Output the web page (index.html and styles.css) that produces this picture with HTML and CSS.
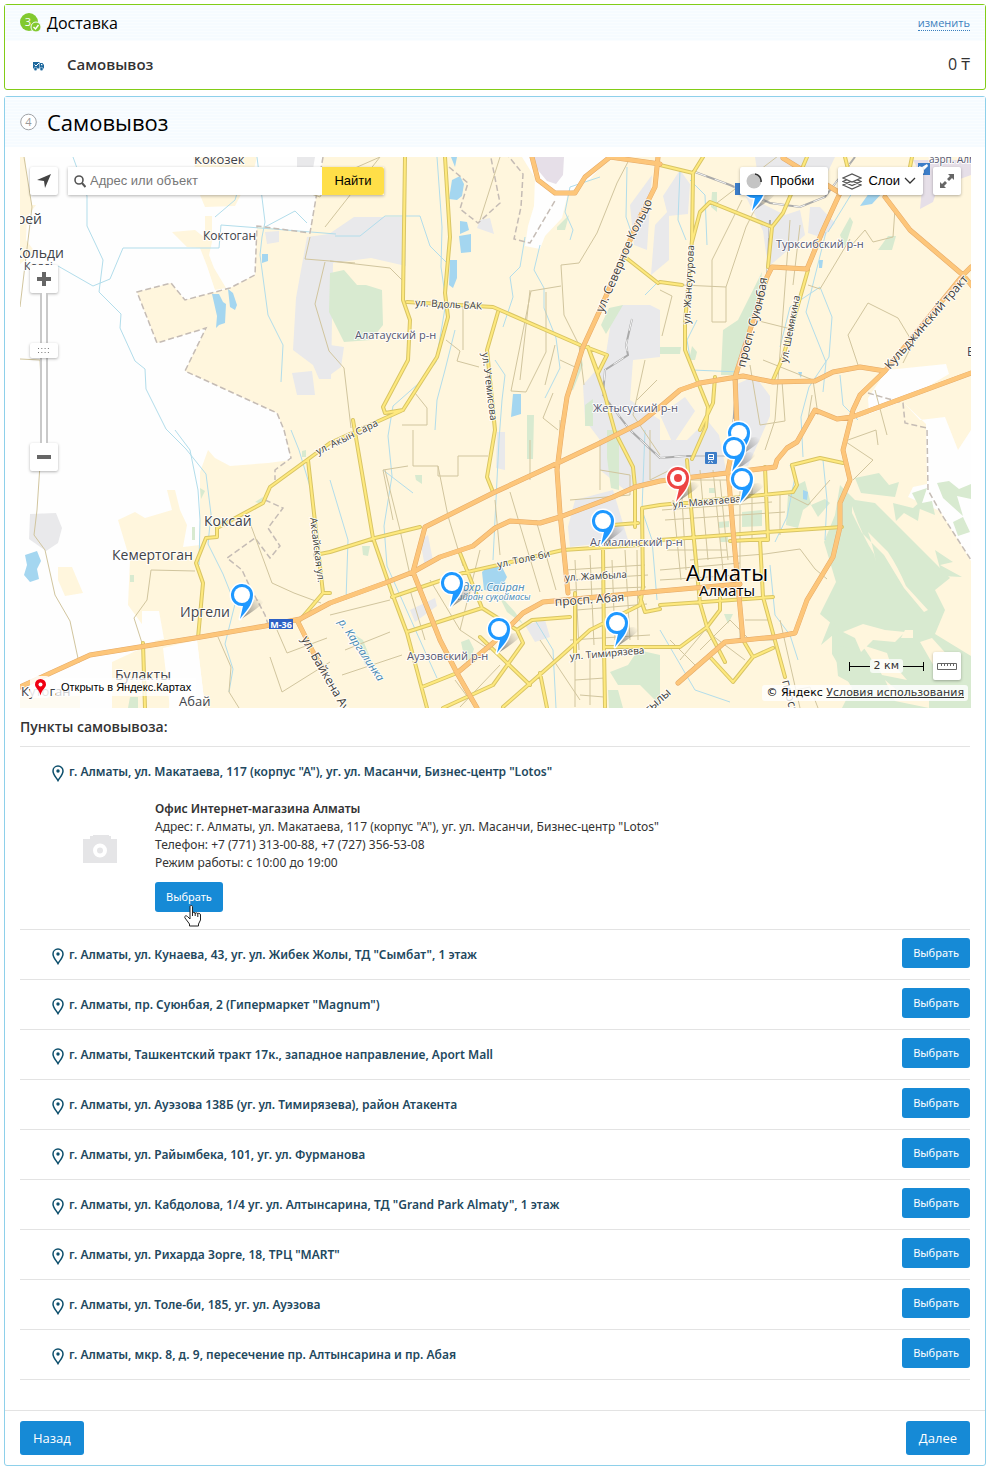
FILE: index.html
```html
<!DOCTYPE html>
<html lang="ru">
<head>
<meta charset="utf-8">
<title>Доставка — Самовывоз</title>
<meta name="viewport" content="width=device-width, initial-scale=1">
<link rel="stylesheet" href="styles.css">
</head>
<body>
<svg class="defs" width="0" height="0" aria-hidden="true">
  <defs>
    <linearGradient id="shade" gradientUnits="userSpaceOnUse" x1="0" y1="23" x2="20" y2="5">
      <stop offset="0" stop-color="#555" stop-opacity=".7"/><stop offset="1" stop-color="#555" stop-opacity="0"/>
    </linearGradient>
    <symbol id="marker" viewBox="-15 -15 42 42" overflow="visible">
      <path d="M-1 24L9 6Q17 2 22 6Q20 11 -1 24Z" fill="url(#shade)"/>
      <path d="M11 0A11 11 0 1 0 1 11L-2 24C3 17 11 10 11 0Z" fill="currentColor" stroke="#fff" stroke-width="3" stroke-linejoin="round"/>
      <path d="M11 0A11 11 0 1 0 1 11L-2 24C3 17 11 10 11 0Z" fill="currentColor"/>
      <circle r="8" fill="#fff"/>
    </symbol>
    <symbol id="place" viewBox="0 0 12 17">
      <path d="M6 1.100C3.200 1.100 1 3.300 1 6c0 3.500 3.200 6.500 5 9.600C7.800 12.500 11 9.500 11 6c0-2.700-2.200-4.900-5-4.900Z" fill="none" stroke="#0d4f6c" stroke-width="1.500"/>
      <circle cx="6" cy="6" r="1.700" fill="#0d4f6c"/>
    </symbol>
  </defs>
</svg>

<section class="panel panel-done">
  <header class="panel-head head-small">
    <svg class="step" width="21" height="20" viewBox="0 0 21 20">
      <circle cx="9" cy="9" r="9" fill="#82c92f"/>
      <text x="8" y="13" class="step-digit">3</text>
      <circle cx="16" cy="14" r="5" fill="#82c92f" stroke="#f7fbff"/>
      <path d="M13.500 14l2 2 3-4" fill="none" stroke="#fff" stroke-width="1.400"/>
    </svg>
    <h2>Доставка</h2>
    <a class="change" href="#delivery">изменить</a>
  </header>
  <div class="chosen">
    <svg class="truck" width="11" height="10" viewBox="0 0 11 10">
      <path d="M0 1h6.500v6.500H0zM7 2h2.500L11 4v3.500H7z" fill="#1b679d"/>
      <path d="M1.500 3.500l1.500 1.500 3-3" fill="none" stroke="#fff"/><path d="M8 3h1l.8 1.200H8z" fill="#fff"/>
      <circle cx="2.500" cy="8" r="1.700" fill="#1b679d" stroke="#fff" stroke-width=".5"/><circle cx="8.500" cy="8" r="1.700" fill="#1b679d" stroke="#fff" stroke-width=".5"/>
    </svg>
    <strong>Самовывоз</strong>
    <span class="price">0 ₸</span>
  </div>
</section>

<section class="panel panel-current">
  <header class="panel-head head-large">
    <svg class="step" width="17" height="18" viewBox="0 0 17 18">
      <circle cx="8.500" cy="9" r="7.800" fill="#fff" stroke="#a0a3a7"/>
      <text x="8.500" y="13" class="step-digit step-open">4</text>
    </svg>
    <h1>Самовывоз</h1>
  </header>

  <div class="content">
  <div class="map">
    <svg class="map-canvas" viewBox="20 157 951 551" preserveAspectRatio="xMidYMid slice" role="img" aria-label="Карта Алматы">
      <rect x="20" y="157" width="951" height="551" fill="#fefefe"/>
      <g class="land">
        <path d="M20 157h5l3 28 4 20h4l-9 12-1 23 9 12-15 12z"/>
        <path d="M193 157h64l-3 12-19 37-30 1-5-12z"/>
        <path d="M172 232l23-2 10 8v-22h7v26l-3 13 5 13 12 20-11 2-8-24-7-18-13-1z"/>
        <path d="M323 157H971V708H205L197 640 163 648 170 708H112V662L155 642 128 605 130 560 118 520 135 512 145 518 172 510 167 490 175 490 180 510 187 525 183 547 200 545 200 472 208 450 215 458 230 466 268 463 291 460 284 430 277 413 185 371 206 328 157 343 137 292 171 283 185 300 230 288 255 275 257 226 310 233Z"/>
        <path d="M58 567h14l11 26-18 3-7-16z"/><path d="M20 697l60-5v16H20z" opacity=".35"/>
      </g>
      <g fill="#fefefe">
        <path d="M522 157h88l-20 22-22 14-6 25-17 18-5 13-15-3 3-20 6-20 1-28z"/>
        <path d="M887 370l59-6 3 10-44 26-36 14-1-16z"/>
        <path d="M903 402l17 18 25-3 13 33 13-20v131l-31-50-32-14 5-10 14-3-1-60z"/>
        <path d="M142 611h17l5 28-22 4zM197 641l-22 4-6 63h36z"/>
      </g>
      <g class="urban">
        <path d="M297 157h18l-2 12h-16zM307 237l22-3 25-17h52v49l-35-8-38 5-2 116-12 0-6-14-20-15 3-52zM292 373l20-2 3 24-18 0zM265 232l14-1v11l-12 2z"/>
        <path d="M30 514l26-1 6 15-4 15-12 8-17-12z"/>
        <path d="M480 220l10-2 4 16-17-6zM330 345l14 2-3 20-11 8z"/>
        <path d="M612 315l10-10 28 0 10 5v47l-27 3-3 40 30 20v60l-35 10-25-20 0-30-15-20-2-35 22-25z"/>
        <path d="M575 500l38-10 15 50-58 7-2-20zM600 435l60 5v40l-25 10-15-20-15-2zM630 205l22-30-5 75-13-5zM655 225l14-15v50l-18 15z"/>
        <path d="M660 440h27l20-20 12 15 8 40-67 8zM735 385l20-9 15 20 0 20-22 50-14 0zM745 195l40 20 15-5 5 25-25 22-12 10-5-36zM810 207l10 0 15 16-12 15-15-5zM680 170l10 14-2 30-20 2-5-20zM755 157h80l-12 25-40 5-25-10z"/>
        <path d="M410 610l25-12 2 8-22 16zM420 540l8-5 5 26-8 6zM525 625l20-5 5 17-15 5zM497 432l8 0v38l-9-2zM660 415l25-18 10 14-22 33z"/>
      </g>
      <g fill="#e6dfe8">
        <path d="M533 157h31l-1 18-7 9-9-3-10-12zM913 160h58v15l-33 12-5 15-13 7 3-30z"/>
      </g>
      <g class="park">
        <path d="M330 273l14-3 13 15 9 0 16 5 1 35-12 15-27 2-15-30z"/>
        <path d="M580 350l-12 40 5 0 10-25zM601 325l8-17 14-3-7 12-10 17zM557 227l12-12-4 15-8 0zM585 405l8-6v27h-8zM607 430l12 0 0 60-8-2-4-30zM527 415l7 0-1 44-6 0z"/>
        <path d="M762 272l-5 45-12 25-8 33-16 0 2-45 15-10zM660 347h21l-1 7h-20zM878 250l10-14 8 0-4 14zM840 235l10-18 3 5-8 25zM712 192l5 0v20l-6-5zM692 346l5 6-2 8h-6z"/>
        <path d="M742 512l20-2v16l-20 1zM793 487l12-6 6 23-8 6-5 18-12-3 2-30zM811 505l14-6 5 4-12 14zM718 522l11-1v6l-10 1zM709 488h6v5h-6zM724 614h9l-5 10zM720 537h8v5h-8z"/>
        <path d="M855 500l20 3 25 25 30 30 20 20-15 12 10 20-10 24 36 22v52H842l10-20-20-34 0-30-12-10 16-32-12-40 11-27 5-30z"/>
        <path d="M855 478l24-5 10 12 10-3-4 15-34-4zM893 503l20 5 8-7-3 20-14-8-8 8zM912 493l15-5-5 15 10-2 3 14-15-6zM937 483l12-2 10 8 12-5 0 15-14-3 6 20-20-18zM953 522l10-5 7 15-12 4zM935 550l18 12-13 3 22 12-20-1z"/>
        <path d="M831 620l8 10-18 15 8-20zM835 645l15 3 10 40-22-12zM610 672l18-7 10-15 22 5 0 50-20-20-22 0zM608 690l10 0 5 18-14 0zM461 642l8-3 5 10-6 17-4-10zM355 635l8 5 10 25-8 0zM497 592l18 20 8 12-16-12zM362 546l8 0-2 10-5-1zM415 475l7 0v9l-6-4zM255 502l8-5-1 7zM302 451l4-1 0 7-4 0zM192 527l3 0v13l-3 0zM200 488l5 3-4 8zM130 575h4v7h-4zM130 697h8v11h-10z"/>
      </g>
      <g fill="#fff6dd">
        <path d="M843 632l20-8 22 6 20 2-10 10-22-2-12 12-6-14zM862 645l25 8 5 15-20-8zM875 662l20 4 12 14-25-5zM905 630l8 0 0 8-12 0zM920 642l12-4 18 20-12 0 22 20-25-10zM885 680l14 12 30 8v8l-34-7z"/>
        <path d="M852 506q10 30 22 48l2 8q-4-20-8-30l20 20q10 15 18 34l22 24-4 2-20-24-20-33-22-22-10-20z"/>
      </g>
      <g fill="#a4d6f0">
        <path d="M212 294l7 0 4 8 3 2-1 19-6 2-3 3 1-12zM228 289l5 4 4 12-2 5-5-3zM262 254l6 0 0 7-6 2zM25 555l12-4 4 10-4 8 2 10-9 3-6-7 3-10z"/>
        <path d="M452 180l8-4 4 8-2 12-5 4-8-1zM451 157h6l-2 10zM460 221l7 1 2 8-9 4zM459 236l12-2v18l-10 1zM450 260l7 0v18l-4 10-4-3zM513 394l8 0v20l-10 3zM482 572l7-7 12 0 6 12-8 15-15-2zM803 490l5 2-1 8-4-1zM860 206l14-20 10 5-12 13zM819 260l4 0-1 8-3 0zM798 372l4 0-1 6z"/>
      </g>
      <g class="stream">
        <path d="M73 157l14 39v30l9 19 7 15-4 32 22 22-1 14 15 33 10 8 1 20 20 40 20 20 20 25 5 40-3 30 15 30 12 30-10 40 8 25-4 23M58 266l35 20 17-7 13-31h96l2-23 65 5 50 4M257 157l8 65-3 15-2 18 8 60 15 30-2 37M215 217l20-17 10-33M265 227l30-16 12 12M175 430l15 20 8 40 2 30-1 45M291 430l8 20 12 40 5 50 8 50M335 236h25l25-20h35l10 30 17 17M437 157l5 70-1 40 5 35-10 60-18 22-25 22-5 30 4 40-8 50 3 40 40 90 10 22M495 360l10 15-3 25-3 40-6 120M525 237l-5 30-10 10 3 20-10 30M540 245l-6 25 10 18 0 20 12 30 4 30-15 30M383 470l30 23M455 330l-10 40-8 30-2 30M600 177l-30 10-5 25 8 18-3 10"/>
        <path d="M680 170l-2 50 8 20M690 180l15 15 2 50M627 167l-1 50 7 20-5 15M697 320l-10 20 5 30 48 2M780 347l10-40 30-20 12 30-3 40-20 30-8 30 2 40M826 232l-20 80 20 50-3 30M840 375l3 30 15 15M868 167l-40 65M790 465l5 12-8 40-12 25M660 280l-15 15M823 460l4 40-2 40M535 620l18 30 3 58M770 565l5 50 15 20 8 25M660 630l35 60 35 12M645 430l-3 80 10 30 5 60M330 480l18 60-2 60"/>
      </g>
      <g class="border">
        <path d="M323 157l-13 76-53-7-2 49-25 13-45 12-14-17-34 9 20 51 49-15-21 43 92 42 7 17 7 28-16 12v10"/><path d="M265 500l18 8-15 20 12 18-10 12-15-20-28 20 15 12 7 15 16 30 4 12M449 167l19 16-8 26 18 14 22-20-10-50 15-1 18 22-2 33-7 32 16 4 26-44M868 393l35 10 2 20 22 5 1 62 14 25 29 45"/>
      </g>
      <g class="lane">
        <path d="M24 157l8 50-12 100M20 359l20 1 3 60-6 90-3 25 11 15 10 45 15 26 9 42M151 570l44 1M151 570l-4 30-13 18 8 25M250 523l22 60 22 10 27 10M277 630l10 23 40-15M270 657l12 35 48-30M218 637l13 30-2 25 10 16M300 190l20 7 10-18 50-22M310 237l-5 22 50 4M325 262l-10 42 14 47 15 17 7 60M380 157l-55 70M330 261l60 7 15 15M446 340l14 11-3 10 22 6M463 303v47M480 220l20-63M415 393l12 15v17h-25M413 430v36h25v10h20v-20h30M438 466l10 50 15 50M385 470l15 60 10 45M408 466l-25 4 10 50M510 492l30 100M536 520l20 70M495 500l5 55"/>
        <path d="M561 265l3 50 15 30 5 40M561 265l18-2 18-30 20-50 13-25M561 286l-30 5-20 100 15 1 20-40 0-60M530 290l-10 90M555 345l-10 40M560 360l17 8M553 393l-10 25 15 12M600 470l30 5v20l-60 5M600 440v50M530 440v40M645 360l-12 55 27 40M637 400l20-20M650 430v50l20-10"/>
        <path d="M660 290l12 6-10 40M713 206l65-50M742 200l-30 60v62h14l0-35 20-60 10-20M682 285l44 2M755 320l40 10M790 220l-15 200-10 30M800 225l-7 60M808 285l12 4 30-50M850 247l15-17 8 12 20-5 2-28M848 335l20-32 30 15 15 25-10 20M848 335l10 30M750 365l10 60 25-4-3-40M763 360l50 20 5 35M812 395l-5 30M875 390l12 45M848 440l28-10 2 15M830 480l-22 25-20-10M843 440l30 20-20 20"/>
        <path d="M660 480h80M662 510l110-8M665 520l120-8M667 550h60M690 560l75-6 35-5 15 20 12 10M673 500l8 80M681 480l5 90M700 470l8 90M713 470l10 100M720 480l8 80M740 490v80M752 480v60M780 495v40M660 570l80-7M660 580l80-5M575 560l4 90M590 555l4 90M612 560l3 80M625 550l5 90M637 550l1 90M565 570l80-5M568 580l80-5M570 640l80-5M577 610l70-6M570 590l76-3M700 650l30-30 20 20M680 660l25-30 40 30M670 640l25 25M740 600v40h33M745 620h25M780 620l20 88M795 690l15-3 8 21"/>
        <path d="M345 650l45-18M342 675l60-20M390 600l-60 15M410 590l15 50M430 580l30 50 30 20M480 550l-20 80M455 680l20 27M540 640l40 60M575 650v57M590 650v55M575 680l30-2M580 695l24 2M500 665l-40 42M560 420v20"/>
      </g>
      <g class="rail">
        <path id="r" d="M695 172l35 13 40 18 30 4 25-10 30-40M632 319l-6 26 2 10-23 15-2 25 27 35 30 28 25-2h60M767 280l3-60M737 377l-4 50"/>
        <use href="#r" class="rail-dash"/>
      </g>
      <g>
        <g class="road minor-edge">
          <path id="y" d="M405 157l-2 143 7 20-2 40-25 47 2 6 18-3 34-53 11-40-3-24 5-56-5-80M407 302l86 5 87 38M498 312l-11 38 8 80-8 47 6 15M403 410l-73 33-23 17-37 27-7 16-46 25v9l-11 1-10 25 7 20-5 55M353 420l20 118 19 55 15 40 20 75M330 552l45-14 45-11M392 597l71-24 100-23 77-5 20-5 107-8 75-5M460 553l22 55 35 22 6 13-30 42-50 23M407 632l75-24M480 637l50 48M422 687l35-14M503 707l57-50 30-27 50-25 3-18-1-79 18-3 133-13 4-7-5-20 28-7 23 5M517 630l15-10 38-3M603 547l1 100 1 60M687 460l6 70 7 73 7 24 18 35M765 467l3 73-8 0 3 57 22 80M660 605l113-8M720 597v13l-13 17-27 20h-76M710 657l23 25 20-25 20-9M743 640l10 17M730 541l38-2M660 165l33 8-1 67-7 83v27l23 57-2 20-14 32M693 173l10-16M772 227l-62-25-10 10-8 30M768 267l4-40 11-14 24-56M808 270l-25 87-10 23M660 282l22 3M715 377l-2 26-13 27M625 257l33 26M586 347l21 8-9 18-10-26 16 45 11 40 18 35 2 20v40M308 460l15 133-23 27M143 643l2 65M575 593l0 60M540 673l7 35M315 555l15-3M323 593l7 0M613 525l25-2M845 157l5 20M912 157l-2 10M640 597l5 15 15-3"/>
        </g>
        <use href="#y" class="road minor-fill"/>
      </g>
      <g>
        <g class="road major-edge">
          <path id="o" d="M20 687l70-32 105-17 70-12 35-7 30-16 55-20 28-11 27-15 33-11 22-18 15-7 30 2 20-6 53-20 22-10 25-6 67-8 48-6 2-7 10-12 10-6 18-32 22 9 15-2 119-44M413 572l12-45 68-34 67-31 40-19 40-20 20-16 20-17 20-7 43-7 30 6 42-1 18-9 27-5 25 4-25 24-7 15-5 20-5 20 7 30-10 23v24l-7 30-26 43-12 33-20 4-50 5-47 41M532 157l6 23 17 13h20l10-16 25-20 50 7M658 157l-3 30-15 30-40 93-17 37-16 50-5 33-5 40 3 43 8 80M735 377l32-100 5-10 35 2 16-39 17-37-57-35M735 377l2 50-9 43 5 60 10 110M885 197l25 33 53 45 10 12M885 371l78-96 8-8M457 673l36-30 30-30 20-11 117-11 80-7M413 572l27 68 17 33 20 35M298 622l15 30 12 20"/>
        </g>
        <use href="#o" class="road major-fill"/>
      </g>
      <g class="labels">
        <text x="194" y="164" font-size="13">Кокозек</text><text x="42" y="224" text-anchor="end" font-size="14">рей</text>
        <text x="64" y="258" text-anchor="end" font-size="14">Кольди</text><text x="24" y="270" font-size="11">Колді</text>
        <text x="203" y="240" font-size="12">Коктоган</text><text x="204" y="526" font-size="14">Коксай</text><text x="112" y="560" font-size="14">Кемертоган</text><text x="180" y="617" font-size="14">Иргели</text><text x="115" y="680" font-size="14">Булакты</text><text x="179" y="706" font-size="13">Абай</text><text x="21" y="696" font-size="13">Кутоган</text><text x="967" y="356" font-size="12">Б</text>
        <g class="district"><text x="355" y="339">Алатауский р-н</text><text x="593" y="412">Жетысуский р-н</text><text x="776" y="248">Турксибский р-н</text><text x="590" y="546">Алмалинский р-н</text><text x="407" y="660">Ауэзовский р-н</text><text x="929" y="163" font-size="10">аэрп. Алматы</text></g>
        <g class="street">
          <text transform="translate(415 306) rotate(3)">ул. Вдоль БАК</text><text transform="translate(482 353) rotate(83)">ул. Утемисова</text><text transform="translate(318 455) rotate(-26)">ул. Акын Сара</text><text transform="translate(690 324) rotate(-87)">ул. Жансугурова</text><text transform="translate(787 363) rotate(-79)">ул. Шемякина</text><text transform="translate(310 518) rotate(83)">Аксайская ул.</text><text transform="translate(498 568) rotate(-12)">ул. Толе би</text><text transform="translate(565 581) rotate(-3)">ул. Жамбыла</text><text transform="translate(570 660) rotate(-5)">ул. Тимирязева</text><text transform="translate(673 508) rotate(-5)">ул. Макатаева</text>
          <g font-size="12"><text transform="translate(555 606) rotate(-4)">просп. Абая</text><text transform="translate(301 639) rotate(60)">ул. Байкена Ауэзова</text><text transform="translate(890 370) rotate(-49)">Кульджинский тракт</text><text transform="translate(649 714) rotate(-42)">ғылы</text><text transform="translate(782 681) rotate(76)">просп</text>
          <path id="c1" d="M603 313L638 231Q646 218 651 204" fill="none" stroke="none"/><text><textPath href="#c1">ул. Северное Кольцо</textPath></text>
          <path id="c2" d="M745 368Q753 335 761 310Q766 292 768 270" fill="none" stroke="none"/><text><textPath href="#c2">просп. Суюнбая</textPath></text></g>
        </g>
        <g class="water"><text x="457" y="591">вдхр. Сайран</text><text x="452" y="600" font-size="9">Сайран суқоймасы</text><text transform="translate(338 622) rotate(56)">р. Каргалинка</text></g>
        <text x="686" y="581" class="city" font-size="22">Алматы</text><text x="699" y="596" class="city" font-size="15">Алматы</text>
      </g>
      <rect x="269" y="619" width="24" height="10" fill="#2d60c4"/><text x="281" y="628" class="shield">М-36</text>
      <rect x="705" y="452" width="12" height="12" rx="1" fill="#3c7dc8"/><path d="M708.500 454.500h5v5h-5zM708.500 463l1-2m3 2l-1-2M709 457.500h4" fill="none" stroke="#fff"/>
      <rect x="735" y="183" width="12" height="12" fill="#3c7dc8"/><rect x="918" y="163" width="12" height="12" fill="#3c7dc8"/><path d="M919 166l3 1 5-3 1 2-4 4v4l-2-3-2 1z" fill="#fff"/>
      <g class="markers">
        <use href="#marker" x="739" y="172" width="42" height="42"/><use href="#marker" x="227" y="580" width="42" height="42"/><use href="#marker" x="437" y="568" width="42" height="42"/><use href="#marker" x="484" y="614" width="42" height="42"/><use href="#marker" x="588" y="506" width="42" height="42"/><use href="#marker" x="602" y="608" width="42" height="42"/><use href="#marker" x="724" y="418" width="42" height="42"/><use href="#marker" x="719" y="433" width="42" height="42"/><use href="#marker" x="727" y="464" width="42" height="42"/>
        <use href="#marker" x="663" y="463" width="42" height="42" class="marker-active"/><circle cx="678" cy="478" r="4" fill="#ed4543"/>
      </g>
    </svg>

    <div class="map-ui">
      <div class="toolbar">
        <button class="tool square" type="button" aria-label="Моё местоположение"><svg width="16" height="16" viewBox="0 0 16 16"><path d="M1 7L15 1 9 15 8 8z" fill="#444"/></svg></button>
        <form class="search">
          <label class="search-box"><svg width="12" height="13" viewBox="0 0 12 13"><circle cx="5" cy="5" r="4" fill="none" stroke="#555" stroke-width="1.600"/><path d="M8 8l3.500 4" stroke="#555" stroke-width="2"/></svg><input type="text" placeholder="Адрес или объект" aria-label="Адрес или объект"></label>
          <button type="button">Найти</button>
        </form>
        <div class="toolbar-right">
          <button class="tool traffic" type="button"><svg width="16" height="16" viewBox="0 0 16 16"><circle cx="8" cy="8" r="7.500" fill="#c4c4c4"/><path d="M9 1A7 7 0 0 1 15 9" fill="none" stroke="#333" stroke-width="1.600"/></svg>Пробки</button>
          <button class="tool layers" type="button"><svg width="20" height="17" viewBox="0 0 20 17" fill="#fff" stroke="#555" stroke-width="1.300"><path d="M1 12l9 4 9-4-9-4zM1 8.500l9 4 9-4-9-4z"/><path d="M1 5l9 4 9-4-9-4z"/></svg>Слои<svg width="12" height="8" viewBox="0 0 12 8"><path d="M1 1l5 5 5-5" fill="none" stroke="#333" stroke-width="1.300"/></svg></button>
          <button class="tool square" type="button" aria-label="Развернуть карту"><svg width="16" height="16" viewBox="0 0 16 16"><path d="M9 1h6v6l-2-2-3 3-2-2 3-3zM1 9l2 2 3-3 2 2-3 3 2 2H1z" fill="#666"/></svg></button>
        </div>
      </div>
      <div class="zoom">
        <button class="tool square" type="button" aria-label="Приблизить"><svg width="14" height="14" viewBox="0 0 14 14"><path d="M5 0h4v5h5v4H9v5H5V9H0V5h5z" fill="#666"/></svg></button>
        <div class="track"><span class="handle"><svg width="12" height="5" viewBox="0 0 12 5"><path d="M0 .5h12M0 4.500h12" stroke="#777" stroke-dasharray="1 2.300"/></svg></span></div>
        <button class="tool square" type="button" aria-label="Отдалить"><svg width="14" height="4" viewBox="0 0 14 4"><path d="M0 0h14v4H0z" fill="#666"/></svg></button>
      </div>
      <div class="map-foot">
        <a class="open-map" href="#yandex"><span class="open-icon"><svg width="11" height="17" viewBox="0 0 11 17"><path d="M5.500 0A5.500 5.500 0 0 0 0 5.500C0 9 4 10 5.500 16.500 7 10 11 9 11 5.500A5.500 5.500 0 0 0 5.500 0z" fill="#f00012"/><circle cx="5.500" cy="5.500" r="2" fill="#fff"/></svg></span><span class="open-text">Открыть в Яндекс.Картах</span></a>
        <div class="foot-right">
          <div class="scale-row"><div class="scale"><i></i><span>2 км</span><i></i></div><button class="tool square" type="button" aria-label="Линейка"><svg width="20" height="7" viewBox="0 0 20 7"><path d="M.5.5h19v6H.5zM4.500 1v2M7.500 1v2M10.500 1v2M13.500 1v2M16.500 1v2" fill="none" stroke="#666"/></svg></button></div>
          <div class="copyright">© Яндекс <a href="#terms">Условия использования</a></div>
        </div>
      </div>
    </div>
  </div>

  <h3>Пункты самовывоза:</h3>
  <ul class="points">
    <li class="open">
      <div class="point"><svg class="place"><use href="#place"/></svg><a href="#p1">г. Алматы, ул. Макатаева, 117 (корпус "А"), уг. ул. Масанчи, Бизнес-центр "Lotos"</a></div>
      <div class="details">
        <svg class="photo" width="34" height="28" viewBox="0 0 34 28"><path d="M0 4h7V1h3V0h16v1h2v3h6v24H0z" fill="#e5e5e7"/><circle cx="17" cy="15.500" r="5" fill="none" stroke="#fff" stroke-width="4"/></svg>
        <div class="info">
          <strong>Офис Интернет-магазина Алматы</strong>
          <p>Адрес: г. Алматы, ул. Макатаева, 117 (корпус "А"), уг. ул. Масанчи, Бизнес-центр "Lotos"</p>
          <p>Телефон: +7 (771) 313-00-88, +7 (727) 356-53-08</p>
          <p>Режим работы: с 10:00 до 19:00</p>
          <div class="action"><button class="btn" type="button">Выбрать</button>
          <svg class="cursor" width="18" height="22" viewBox="0 0 18 22"><path d="M6 1.500c0-1.300 2.500-1.300 2.500 0V8c0-1 2.700-1 2.700.5 0-1 2.600-1 2.600.5 0-1 2.700-1 2.700 1v5l-2 4v2h-9v-2L1 13c-1-1.800 1-3 2.500-1.500L6 14z" fill="#fff" stroke="#222"/><path d="M8.500 8v3m2.700-3v3m2.600-2v3" stroke="#222"/></svg></div>
        </div>
      </div>
    </li>
    <li><div class="point"><svg class="place"><use href="#place"/></svg><a href="#p2">г. Алматы, ул. Кунаева, 43, уг. ул. Жибек Жолы, ТД "Сымбат", 1 этаж</a></div><button class="btn" type="button">Выбрать</button></li>
    <li><div class="point"><svg class="place"><use href="#place"/></svg><a href="#p3">г. Алматы, пр. Суюнбая, 2 (Гипермаркет "Magnum")</a></div><button class="btn" type="button">Выбрать</button></li>
    <li><div class="point"><svg class="place"><use href="#place"/></svg><a href="#p4">г. Алматы, Ташкентский тракт 17к., западное направление, Aport Mall</a></div><button class="btn" type="button">Выбрать</button></li>
    <li><div class="point"><svg class="place"><use href="#place"/></svg><a href="#p5">г. Алматы, ул. Ауэзова 138Б (уг. ул. Тимирязева), район Атакента</a></div><button class="btn" type="button">Выбрать</button></li>
    <li><div class="point"><svg class="place"><use href="#place"/></svg><a href="#p6">г. Алматы, ул. Райымбека, 101, уг. ул. Фурманова</a></div><button class="btn" type="button">Выбрать</button></li>
    <li><div class="point"><svg class="place"><use href="#place"/></svg><a href="#p7">г. Алматы, ул. Кабдолова, 1/4 уг. ул. Алтынсарина, ТД "Grand Park Almaty", 1 этаж</a></div><button class="btn" type="button">Выбрать</button></li>
    <li><div class="point"><svg class="place"><use href="#place"/></svg><a href="#p8">г. Алматы, ул. Рихарда Зорге, 18, ТРЦ "MART"</a></div><button class="btn" type="button">Выбрать</button></li>
    <li><div class="point"><svg class="place"><use href="#place"/></svg><a href="#p9">г. Алматы, ул. Толе-би, 185, уг. ул. Ауэзова</a></div><button class="btn" type="button">Выбрать</button></li>
    <li><div class="point"><svg class="place"><use href="#place"/></svg><a href="#p10">г. Алматы, мкр. 8, д. 9, пересечение пр. Алтынсарина и пр. Абая</a></div><button class="btn" type="button">Выбрать</button></li>
  </ul>
  </div>
  <footer class="nav"><button class="btn btn-large" type="button">Назад</button><button class="btn btn-large" type="button">Далее</button></footer>
</section>
</body>
</html>
```
FILE: styles.css
```css
* { box-sizing: border-box; }
body { margin: 4px 5px 3px 4px; background: #fff; color: #333; font: 12px/18px "Open Sans", "Noto Sans", sans-serif; }
button, input { font: inherit; }
h1, h2, h3, p, ul { margin: 0; padding: 0; }
h1, h2 { color: #000; font-weight: 400; }
.defs { position: absolute; }

.panel { border: 1px solid #8ed0ea; border-radius: 3px; background: #fff; }
.panel-done { border-color: #82cc17; margin-bottom: 6px; }
.panel-head { display: flex; align-items: center; gap: 6px; padding: 0 15px; background: repeating-linear-gradient(#f6fbff 0 2px, #fafdff 2px 3px); }
.head-small { height: 36px; }
.head-small h2 { font-size: 16px; line-height: 24px; }
.head-large { height: 50px; gap: 10px; }
.head-large h1 { font-size: 22px; line-height: 32px; }
.step-digit { fill: #fff; font-size: 11px; text-anchor: middle; }
.step-open { fill: #999; }
.change { margin-left: auto; color: #3a7fbd; font-size: 11px; line-height: 15px; text-decoration: none; border-bottom: 1px dotted #3a7fbd; }
.chosen { display: flex; align-items: center; height: 48px; padding: 0 15px 2px 28px; }
.chosen strong { margin-left: 23px; font-size: 15px; font-weight: 600; }
.truck { margin-top: 3px; }
.price { margin-left: auto; font-size: 16px; }
.content { padding: 10px 15px 30px; }

.map { position: relative; aspect-ratio: 951 / 551; margin-right: -1px; overflow: hidden; }
.map-canvas { display: block; width: 100%; height: 100%; }
.land { fill: #fff6dd; }
.urban path { fill: #e9e9eb; }
.park { fill: #d8ead0; }
.stream { fill: none; stroke: #b2ddeb; stroke-linejoin: round; }
.border { fill: none; stroke: #c5bcb5; stroke-width: 1.5; stroke-dasharray: 6 3; }
.lane { fill: none; stroke: #d1c59e; stroke-linejoin: round; }
.road { fill: none; stroke-linejoin: round; stroke-linecap: round; }
.minor-edge { stroke: #d9c565; stroke-width: 4; }
.minor-fill { stroke: #fee97e; stroke-width: 2; }
.major-edge { stroke: #e5aa68; stroke-width: 5; }
.major-fill { stroke: #fdc67a; stroke-width: 4; }
.rail { fill: none; stroke: #aaa; stroke-width: 2; }
.rail-dash { stroke: #f5f5f5; stroke-width: 1; stroke-dasharray: 12 9; }
.labels { fill: #414349; stroke: #fff; stroke-width: 2px; stroke-opacity: .85; paint-order: stroke; stroke-linejoin: round; }
.district { fill: #555770; font-size: 11px; }
.street { fill: #403d3a; font-size: 10px; }
.water { fill: #4688b3; font-size: 11px; font-style: italic; }
.city { fill: #000; }
.shield { fill: #fff; font-size: 9px; font-weight: 700; text-anchor: middle; }
.markers { color: #1e98ff; }
.marker-active { color: #ed4543; }

.map-ui { position: absolute; inset: 0; display: flex; flex-direction: column; padding: 10px; color: #000; font: 12px/18px "Liberation Sans", Arial, sans-serif; }
.tool { display: flex; align-items: center; justify-content: center; height: 28px; padding: 0 14px 0 6px; border: 0; border-radius: 2px; background: #fff; color: #000; box-shadow: 0 1px 3px rgba(0, 0, 0, .3); }
.square { width: 28px; padding: 0; }
.toolbar { display: flex; gap: 10px; }
.search { display: flex; width: 316px; height: 28px; box-shadow: 0 1px 3px rgba(0, 0, 0, .3); }
.search-box { display: flex; flex: 1; align-items: center; gap: 4px; padding-left: 6px; background: #fff; }
.search input { flex: 1; min-width: 0; padding: 0; border: 0; outline: 0; font-size: 13px; }
.search input::placeholder { color: #777; }
.search button { width: 62px; padding: 0; border: 0; border-radius: 0 3px 3px 0; background: #ffdf48; color: #000; font-size: 13px; }
.toolbar-right { display: flex; gap: 10px; margin-left: auto; font-size: 13px; }
.traffic { gap: 8px; }
.layers { gap: 6px; padding: 0 7px 0 4px; }
.layers svg:last-child { margin-left: -2px; }
.zoom { width: 28px; margin-top: 70px; }
.track { position: relative; width: 8px; height: 150px; margin: 0 auto; border: solid #c9c9c9; border-width: 0 2px; background: #fff; }
.handle { position: absolute; top: 50px; left: -12px; display: flex; align-items: center; justify-content: center; width: 28px; height: 15px; border-radius: 2px; background: #fff; box-shadow: 0 1px 3px rgba(0, 0, 0, .3); }
.map-foot { display: flex; align-items: flex-end; justify-content: space-between; margin-top: auto; }
.open-map { display: flex; align-items: center; gap: 6px; color: #000; font-size: 11px; text-decoration: none; }
.open-icon { display: flex; align-items: center; justify-content: center; width: 20px; height: 22px; border-radius: 4px; background: rgba(255, 255, 255, .85); }
.open-text { padding: 0 5px; background: rgba(255, 255, 255, .75); }
.foot-right { display: grid; gap: 5px; justify-items: end; margin: 0 0 -3px; }
.scale-row { display: flex; align-items: center; gap: 9px; }
.scale { display: flex; align-items: center; font: 11px/14px "DejaVu Sans", sans-serif; color: #333; }
.scale i { width: 21px; height: 9px; border-left: 1px solid #000; background: linear-gradient(#000, #000) center / 100% 1px no-repeat; }
.scale i:last-child { border: 0; border-right: 1px solid #000; }
.scale span { padding: 0 4px; border-radius: 3px; background: rgba(255, 255, 255, .75); }
.copyright { margin-right: -7px; padding: 0 4px; border-radius: 3px; background: rgba(255, 255, 255, .8); font: 11px/16px "DejaVu Sans", sans-serif; }
.copyright a { color: #333; }

h3 { padding: 9px 0; color: #333; font-size: 14px; line-height: 20px; font-weight: 600; }
.points { list-style: none; border-top: 1px solid #e3e3e3; font-family: "Noto Sans", sans-serif; }
.points li { display: flex; align-items: flex-start; justify-content: space-between; min-height: 50px; padding: 8px 0 7px 32px; border-bottom: 1px solid #e3e3e3; }
.points .open { display: block; padding: 8px 0 17px 32px; }
.point { display: flex; align-items: center; gap: 5px; min-height: 34px; }
.place { flex: none; width: 12px; height: 17px; margin-top: 2px; }
.point a { color: #22485e; font-weight: 600; text-decoration: none; }
.details { display: flex; align-items: flex-start; padding: 11px 0 0 31px; }
.photo { flex: none; margin: 35px 38px 0 0; }
.info strong { font-weight: 600; }
.action { position: relative; width: max-content; margin-top: 10px; }
.cursor { position: absolute; left: 29px; top: 23px; }
.btn { display: block; flex: none; height: 30px; padding: 0 11px; border: 0; border-radius: 3px; background: #168ad6; color: #fff; font-size: 11px; line-height: 30px; }
.btn-large { height: 34px; padding: 0 13px; font-size: 13px; }
.nav { display: flex; justify-content: space-between; padding: 10px 15px; border-top: 1px solid #e3e3e3; }
```
